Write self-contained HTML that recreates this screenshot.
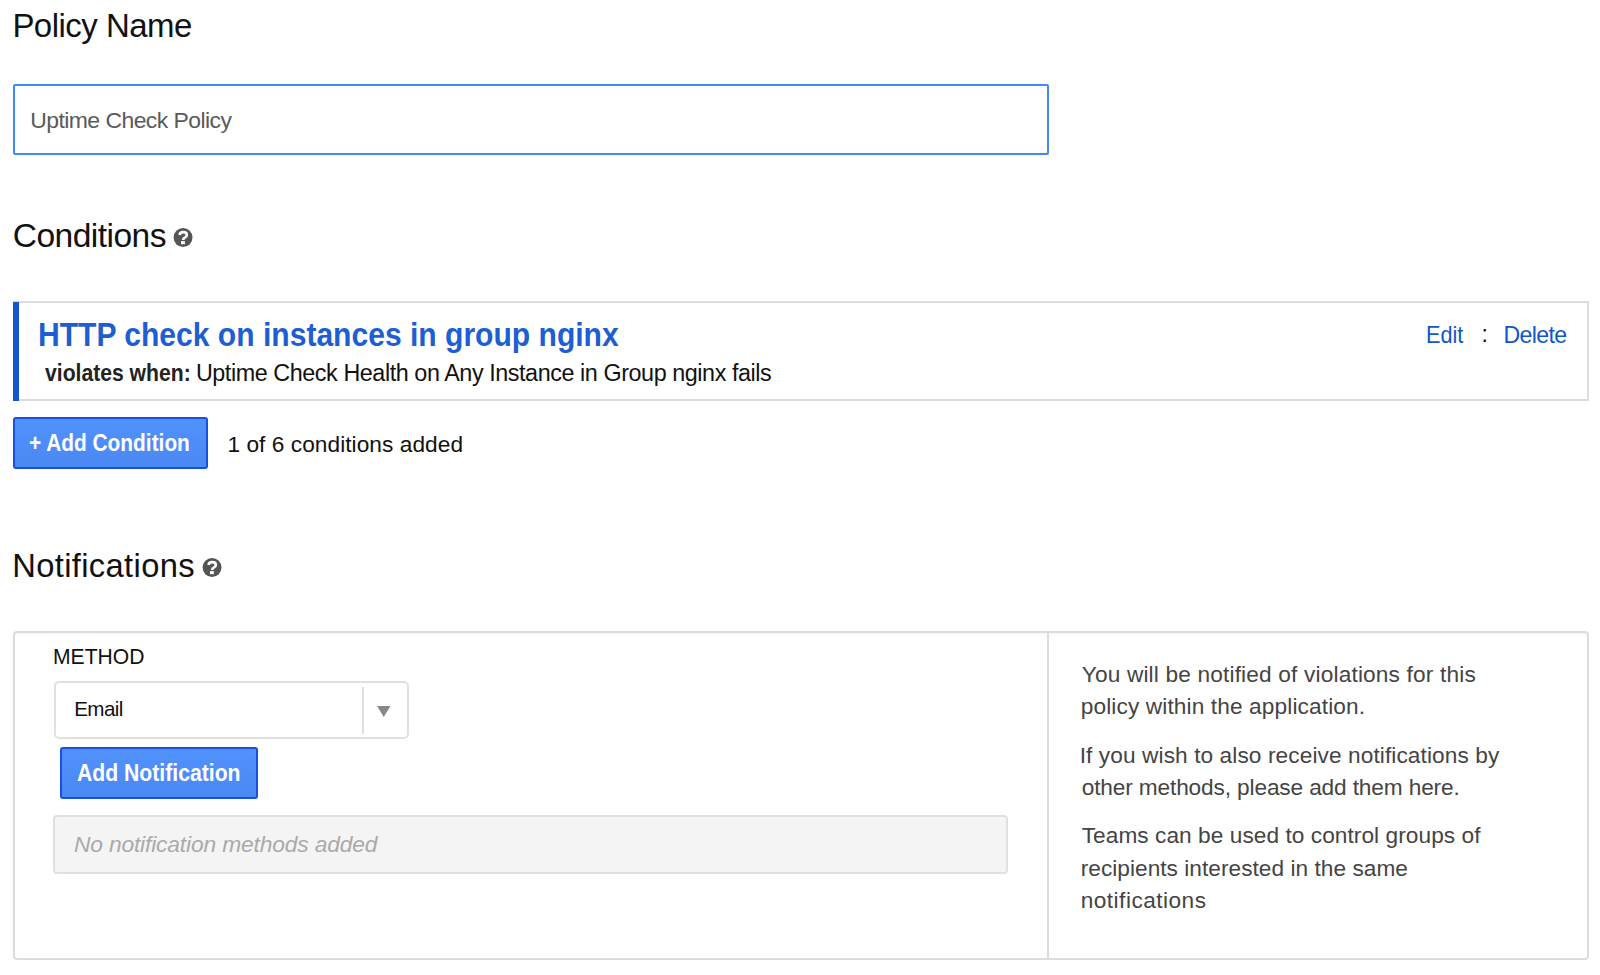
<!DOCTYPE html>
<html><head><meta charset="utf-8"><style>
html,body{margin:0;padding:0;background:#fff;width:1600px;height:975px;overflow:hidden;}
body{position:relative;font-family:"Liberation Sans",sans-serif;}
.t{position:absolute;white-space:nowrap;font-family:"Liberation Sans",sans-serif;}
.box{position:absolute;box-sizing:border-box;}
</style></head><body>
<div class="box" style="left:13px;top:84px;width:1036px;height:71px;border:2px solid #3f89f8;border-radius:2px;"></div>
<div class="box" style="left:13px;top:301px;width:1576px;height:100px;border:2px solid #dcdcdc;"></div>
<div class="box" style="left:13px;top:302px;width:6px;height:99px;background:#1553d0;"></div>
<div class="box" style="left:13px;top:417px;width:195px;height:52px;border:2px solid #1a4fe6;border-radius:3px;background:linear-gradient(#5292fc,#4a88f2);"></div>
<div class="box" style="left:13px;top:631px;width:1576px;height:329px;border:2px solid #dcdcdc;border-radius:4px;box-shadow:inset 0 2px 2px rgba(0,0,0,0.035);"></div>
<div class="box" style="left:1047px;top:632px;width:2px;height:327px;background:#dcdcdc;"></div>
<div class="box" style="left:54px;top:681px;width:355px;height:58px;border:2px solid #e0e0e0;border-radius:5px;"></div>
<div class="box" style="left:362px;top:687px;width:2px;height:47px;background:#dedede;"></div>
<svg class="box" style="left:376px;top:705px" width="16" height="13" viewBox="0 0 16 13"><path d="M1 1 L14.5 1 L7.75 12 Z" fill="#888"/></svg>
<div class="box" style="left:60px;top:747px;width:198px;height:52px;border:2px solid #1a4fe6;border-radius:3px;background:linear-gradient(#5292fc,#4a88f2);"></div>
<div class="box" style="left:53px;top:815px;width:955px;height:59px;border:2px solid #e0e0e0;border-radius:4px;background:#f4f4f4;"></div>
<div class="box" style="left:170px;top:224px;width:26px;height:26px;"><svg width="26" height="26" viewBox="0 0 26 26"><circle cx="13.05" cy="13.45" r="9.45" fill="#555"/><path d="M9.6 11 C9.8 8.9 11.3 8.1 13.2 8.1 C15.3 8.1 16.8 9.3 16.8 10.9 C16.8 12.4 15.7 13 14.7 13.7 C13.9 14.2 13.2 14.7 13.2 16.1" fill="none" stroke="#fff" stroke-width="2.7"/><rect x="11" y="17.1" width="3.9" height="3.1" fill="#fff"/></svg></div>
<div class="box" style="left:199px;top:554px;width:26px;height:26px;"><svg width="26" height="26" viewBox="0 0 26 26"><circle cx="13.05" cy="13.45" r="9.45" fill="#555"/><path d="M9.6 11 C9.8 8.9 11.3 8.1 13.2 8.1 C15.3 8.1 16.8 9.3 16.8 10.9 C16.8 12.4 15.7 13 14.7 13.7 C13.9 14.2 13.2 14.7 13.2 16.1" fill="none" stroke="#fff" stroke-width="2.7"/><rect x="11" y="17.1" width="3.9" height="3.1" fill="#fff"/></svg></div>
<div class="t" style="left:12.4px;top:9.00px;font-size:32.99px;line-height:32.99px;letter-spacing:-0.519px;color:#111;">Policy Name</div>
<div class="t" style="left:30.2px;top:109.00px;font-size:22.97px;line-height:22.97px;letter-spacing:-0.559px;color:#5a5a5a;">Uptime Check Policy</div>
<div class="t" style="left:12.75px;top:219.01px;font-size:33.58px;line-height:33.58px;letter-spacing:-0.551px;color:#111;">Conditions</div>
<div class="t" style="left:37.91px;top:319.00px;font-size:32.7px;line-height:32.7px;letter-spacing:0px;color:#1d5ed2;font-weight:700;transform:scaleX(0.9196);transform-origin:0 0;">HTTP check on instances in group nginx</div>
<div class="t" style="left:45.4px;top:361.00px;font-size:23.76px;line-height:23.76px;letter-spacing:0px;color:#222;font-weight:700;transform:scaleX(0.8903);transform-origin:0 0;">violates when:</div>
<div class="t" style="left:195.9px;top:362.01px;font-size:23.33px;line-height:23.33px;letter-spacing:-0.422px;color:#111;">Uptime Check Health on Any Instance in Group nginx fails</div>
<div class="t" style="left:1425.66px;top:324.00px;font-size:23.11px;line-height:23.11px;letter-spacing:0px;color:#1155cc;transform:scaleX(0.9365);transform-origin:0 0;">Edit</div>
<div class="t" style="left:1481.4px;top:323.16px;font-size:23.11px;line-height:23.11px;letter-spacing:0px;color:#111;">:</div>
<div class="t" style="left:1503.4px;top:324.00px;font-size:23.11px;line-height:23.11px;letter-spacing:-0.61px;color:#1155cc;">Delete</div>
<div class="t" style="left:29.33px;top:431.00px;font-size:23.98px;line-height:23.98px;letter-spacing:0px;color:#fff;font-weight:700;transform:scaleX(0.8703);transform-origin:0 0;">+ Add Condition</div>
<div class="t" style="left:227.4px;top:433.01px;font-size:22.67px;line-height:22.67px;letter-spacing:0.059px;color:#111;">1 of 6 conditions added</div>
<div class="t" style="left:12.25px;top:550.01px;font-size:32.7px;line-height:32.7px;letter-spacing:0.354px;color:#111;">Notifications</div>
<div class="t" style="left:52.98px;top:645.00px;font-size:22.89px;line-height:22.89px;letter-spacing:0px;color:#111;transform:scaleX(0.9222);transform-origin:0 0;">METHOD</div>
<div class="t" style="left:74.2px;top:699.01px;font-size:20.64px;line-height:20.64px;letter-spacing:-0.623px;color:#111;">Email</div>
<div class="t" style="left:76.8px;top:761.00px;font-size:23.98px;line-height:23.98px;letter-spacing:0px;color:#fff;font-weight:700;transform:scaleX(0.8838);transform-origin:0 0;">Add Notification</div>
<div class="t" style="left:73.9px;top:833.01px;font-size:22.82px;line-height:22.82px;letter-spacing:-0.164px;color:#aaa;font-style:italic;">No notification methods added</div>
<div class="t" style="left:1081.7px;top:663.01px;font-size:22.67px;line-height:22.67px;letter-spacing:0.166px;color:#444;">You will be notified of violations for this</div>
<div class="t" style="left:1080.7px;top:695.01px;font-size:22.67px;line-height:22.67px;letter-spacing:0.122px;color:#444;">policy within the application.</div>
<div class="t" style="left:1079.7px;top:744.01px;font-size:22.67px;line-height:22.67px;letter-spacing:0.094px;color:#444;">If you wish to also receive notifications by</div>
<div class="t" style="left:1081.7px;top:776.01px;font-size:22.67px;line-height:22.67px;letter-spacing:-0.137px;color:#444;">other methods, please add them here.</div>
<div class="t" style="left:1081.7px;top:824.01px;font-size:22.67px;line-height:22.67px;letter-spacing:0.056px;color:#444;">Teams can be used to control groups of</div>
<div class="t" style="left:1080.7px;top:857.01px;font-size:22.67px;line-height:22.67px;letter-spacing:0.032px;color:#444;">recipients interested in the same</div>
<div class="t" style="left:1080.7px;top:889.01px;font-size:22.67px;line-height:22.67px;letter-spacing:0.474px;color:#444;">notifications</div>
</body></html>
